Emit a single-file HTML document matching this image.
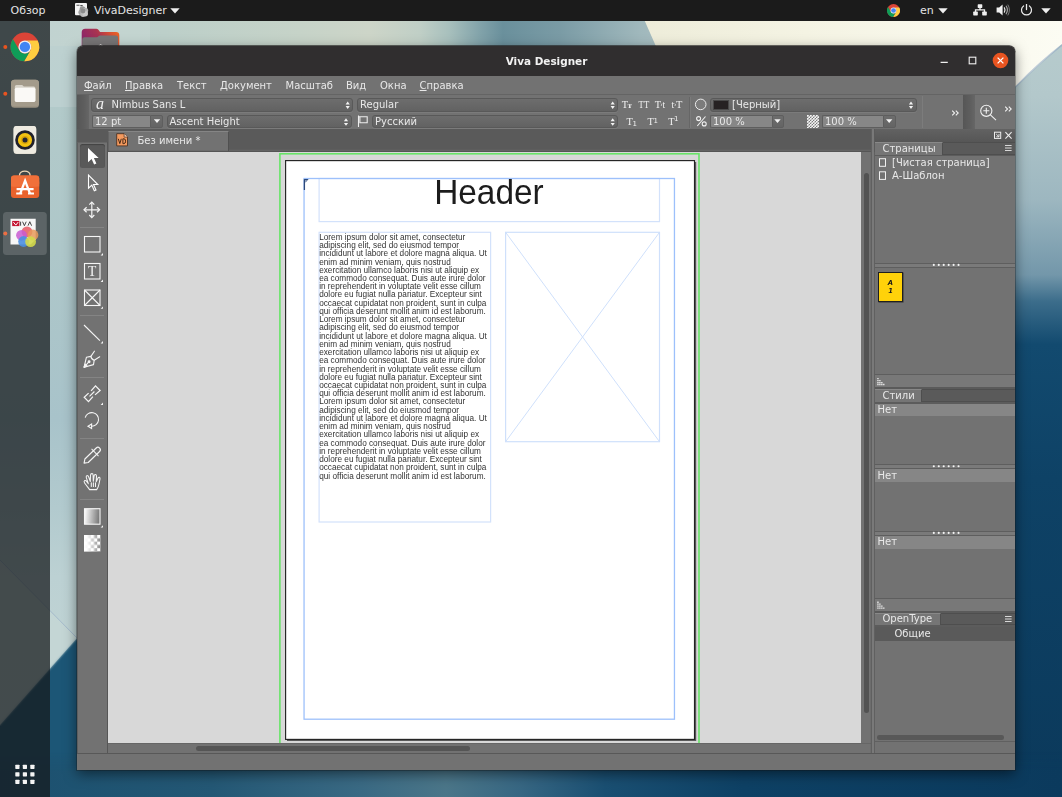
<!DOCTYPE html>
<html lang="ru">
<head>
<meta charset="utf-8">
<title>Viva Designer</title>
<style>
*{box-sizing:border-box;margin:0;padding:0}
html,body{width:1062px;height:797px;overflow:hidden;background:#0f4468}
body{position:relative;font-family:"DejaVu Sans","Liberation Sans",sans-serif;font-size:10px;color:#e8e8e8}
.abs{position:absolute}
#wall{position:absolute;left:0;top:0;width:1062px;height:797px}
#topbar{position:absolute;left:0;top:0;width:1062px;height:20.5px;background:#1b1b1b;font-size:11px;color:#e4e4e4}
#topbar span{position:absolute;top:0;line-height:21px;white-space:pre}
#dock{position:absolute;left:0;top:20.5px;width:50px;height:776.5px;background:rgba(22,26,28,.74)}
#win{will-change:transform;position:absolute;left:77px;top:46px;width:938.300px;height:723.800px;background:#727272;border-radius:6px 6px 0 0;box-shadow:0 4px 13px rgba(0,0,0,.5),0 0 0 1px rgba(30,30,30,.3);overflow:hidden}
#title{position:absolute;left:0;top:0;width:939px;height:30px;background:#302e2f;border-radius:6px 6px 0 0}
#title .t{position:absolute;left:0;width:939px;top:0;line-height:30px;text-align:center;font-weight:700;font-size:10.45px;color:#f2f2f2}
#menu{position:absolute;left:0;top:30px;width:939px;height:19px;background:#727272;border-bottom:1px solid #646464}
#menu span{position:absolute;top:0;line-height:18px;white-space:pre}
#menu u{text-decoration:underline;text-underline-offset:1px}

#in{position:absolute;left:-77px;top:-46px;width:1062px;height:797px}
#in div,#in span,#in svg{position:absolute}
.cb{background:linear-gradient(#6d6d6d,#626262);border:1px solid #595959;border-radius:3px;box-shadow:0 1px 0 rgba(255,255,255,.07)}
.cb span,.fld span{left:0;top:0;white-space:pre;line-height:12px}
.fld{background:#878787;border:1px solid #5e5e5e;border-right:none;border-radius:2px 0 0 2px}
.dd{background:linear-gradient(#6d6d6d,#646464);border:1px solid #5e5e5e;border-radius:0 2px 2px 0}
.dk{background:#5a5a5a}
.ln{background:#5c5c5c}
.tx{white-space:pre;line-height:12px}
</style>
</head>
<body>
<div id="wall"><svg width="1062" height="797" viewBox="0 0 1062 797">
<defs>
<linearGradient id="gR" x1="0" y1="0" x2="0" y2="1">
<stop offset="0" stop-color="#b9cdce"/><stop offset=".12" stop-color="#b3c8cb"/><stop offset=".25" stop-color="#9db7c0"/><stop offset=".345" stop-color="#7397aa"/><stop offset=".378" stop-color="#3c6d8b"/><stop offset=".432" stop-color="#124a6f"/><stop offset=".6" stop-color="#0e4266"/><stop offset="1" stop-color="#0b395b"/>
</linearGradient>
<linearGradient id="gT" x1="0" y1="0" x2="1" y2="0">
<stop offset="0" stop-color="#b6cccb"/><stop offset=".25" stop-color="#bccfc9"/><stop offset=".455" stop-color="#c6d3c8"/><stop offset=".56" stop-color="#cdd5c8"/><stop offset=".636" stop-color="#c0cfc6"/><stop offset=".68" stop-color="#a8c0bd"/><stop offset=".727" stop-color="#82a3aa"/><stop offset=".762" stop-color="#6a909c"/><stop offset=".848" stop-color="#7a9ba5"/><stop offset=".97" stop-color="#a0b8bc"/><stop offset="1" stop-color="#a6bcc0"/>
</linearGradient>
<linearGradient id="gC" x1="0" y1="0" x2="1" y2="0">
<stop offset="0" stop-color="#edecd9"/><stop offset=".4" stop-color="#f4f3e3"/><stop offset="1" stop-color="#fcfcf3"/>
</linearGradient>
<linearGradient id="gL" x1="0" y1="0" x2="0" y2="1">
<stop offset="0" stop-color="#b4cbca"/><stop offset=".3" stop-color="#aec7c9"/><stop offset=".55" stop-color="#a8c3ca"/><stop offset=".68" stop-color="#b2cace"/><stop offset=".78" stop-color="#bcd1d3"/><stop offset="1" stop-color="#c2d5d5"/>
</linearGradient>
<linearGradient id="gB" x1="0" y1="0" x2="1" y2="0">
<stop offset="0" stop-color="#1b506f"/><stop offset=".2" stop-color="#245875"/><stop offset=".34" stop-color="#3a6a84"/><stop offset=".42" stop-color="#4b7689"/><stop offset=".49" stop-color="#376783"/><stop offset=".57" stop-color="#1a4f72"/><stop offset=".7" stop-color="#0e4165"/><stop offset="1" stop-color="#0b3a5d"/>
</linearGradient>
<linearGradient id="gF" x1="0" y1="0.300" x2="1" y2="0"><stop offset="0" stop-color="#8f2767"/><stop offset=".4" stop-color="#a83351"/><stop offset=".75" stop-color="#dd5330"/><stop offset="1" stop-color="#ef6a1f"/></linearGradient>
</defs>
<rect x="0" y="0" width="1062" height="797" fill="url(#gR)"/>
<rect x="0" y="0" width="660" height="60" fill="url(#gT)"/>
<polygon points="635.5,0 1062,0 1062,44 1016,86 1010,100 662,60" fill="url(#gC)"/>
<path d="M1010,92L1016,86.500Q1040,62 1062,45" stroke="#8ea6c2" stroke-width="1.600" fill="none" opacity=".55" filter="url(#bl2)"/><filter id="bl2"><feGaussianBlur stdDeviation=".7"/></filter>
<rect x="0" y="46" width="90" height="680" fill="url(#gL)"/>
<rect x="50" y="21" width="100" height="86" fill="#fff" opacity=".13"/>
<filter id="bl" x="-20%" y="-20%" width="140%" height="140%"><feGaussianBlur stdDeviation="1.2"/></filter><polygon points="-10,736 77,638 130,690 130,810 -10,810" fill="#1b5676" filter="url(#bl)"/>
<polygon points="0,560 77,638 0,725" fill="#c6d7d6" opacity=".75"/><path d="M0,560L77,638" stroke="#8fa6c4" stroke-width=".8" opacity=".7"/>
<linearGradient id="mG" x1="0" y1="0" x2="0" y2="1"><stop offset="0" stop-color="#fff" stop-opacity="0"/><stop offset=".45" stop-color="#fff" stop-opacity="1"/></linearGradient><mask id="mB"><rect x="0" y="752" width="1062" height="45" fill="url(#mG)"/></mask><rect x="0" y="752" width="1062" height="45" fill="url(#gB)" mask="url(#mB)"/>
<g>
<path d="M81.700,48V32.300Q81.700,28.800 85.200,28.800H96.500Q98.100,28.800 99,30.400L99.600,31.400Q100,32.100 101.500,32.100H116Q119.300,32.100 119.300,35.400V48Z" fill="url(#gF)"/>
<path d="M82.200,48V39.500Q82.200,37.300 84.400,37.300H96.500Q97.800,37.300 98.400,36.300Q99,35.400 100.300,35.400H115.800Q118,35.400 118,37.600V48Z" fill="#777576"/>
<path d="M99,45.800l1.600,-1.600l1.600,1.600" stroke="#e4e0e0" stroke-width="1" fill="none"/>
</g>
<rect x="77" y="45.450" width="938.300" height="12" rx="6" fill="#302e2f"/>
</svg></div>
<div id="topbar">
<span style="left:10.5px">Обзор</span>
<svg class="abs" style="left:74px;top:2px" width="16" height="17" viewBox="74 2 16 17"><rect x="75" y="3" width="12" height="12.200" rx="1" fill="#f4f4f4"/><path d="M76.500,5.200h3M80.300,5.600h2.400" stroke="#555" stroke-width="1.100"/><circle cx="82.500" cy="9.200" r="2.900" fill="#979797"/><circle cx="85.300" cy="10.600" r="2.900" fill="#b4b4b4"/><circle cx="81.300" cy="12.300" r="2.900" fill="#a2a2a2"/><circle cx="83" cy="14.300" r="2.700" fill="#b9b9b9"/><circle cx="85.300" cy="13.800" r="2.700" fill="#c9c9c9"/><circle cx="83" cy="11" r="2.400" fill="#8c8c8c"/></svg>
<span style="left:94px">VivaDesigner</span>
<svg class="abs" style="left:170px;top:7.5px" width="10" height="6" viewBox="0 0 10 6"><path d="M0.3,0.3h9.4l-4.7,5.2z" fill="#efefef"/></svg>
<svg class="abs" style="left:887px;top:3.5px" width="13" height="13" viewBox="0 0 48 48"><circle cx="24" cy="24" r="24" fill="#db4437"/><path d="M45.400,13.100A24,24 0 0 1 22.700,48L33.440,29.450A10.900,10.900 0 0 0 24,13.100Z" fill="#ffcd40"/><path d="M22.700,48A24,24 0 0 1 3.860,10.900L14.560,29.450A10.900,10.900 0 0 0 33.440,29.450Z" fill="#0f9d58"/><circle cx="24" cy="24" r="10.900" fill="#f1f1f1"/><circle cx="24" cy="24" r="8.700" fill="#4285f4"/></svg>
<span style="left:920px">en</span>
<svg class="abs" style="left:937.5px;top:7.5px" width="10" height="6" viewBox="0 0 10 6"><path d="M0.3,0.3h9.4l-4.7,5.2z" fill="#efefef"/></svg>
<svg class="abs" style="left:972.5px;top:3.5px" width="14" height="12" viewBox="0 0 14 12"><rect x="4.7" y="0.3" width="4.6" height="3.6" rx=".6" fill="#f0f0f0"/><rect x="0.2" y="7.6" width="4.6" height="3.8" rx=".6" fill="#f0f0f0"/><rect x="9.2" y="7.6" width="4.6" height="3.8" rx=".6" fill="#f0f0f0"/><path d="M7,3.5v2.3M2.5,8v-2.2h9v2.2" stroke="#f0f0f0" stroke-width="1.3" fill="none"/></svg>
<svg class="abs" style="left:996px;top:4px" width="14" height="12" viewBox="0 0 14 12"><path d="M0.6,3.6h2.6l3.4,-3.2v11.2l-3.4,-3.2h-2.6z" fill="#f0f0f0"/><path d="M8.2,3.4q1.6,2.6 0,5.2" stroke="#e4e4e4" stroke-width="1.2" fill="none"/><path d="M10,1.8q2.8,4.2 0,8.4" stroke="#a9a9a9" stroke-width="1.1" fill="none"/><path d="M11.8,0.6q3.2,5.4 0,10.8" stroke="#7c7c7c" stroke-width="1" fill="none"/></svg>
<svg class="abs" style="left:1019.5px;top:3.5px" width="13" height="12" viewBox="0 0 13 12"><path d="M6.5,0.3v5.2" stroke="#eee" stroke-width="1.3" fill="none" stroke-linecap="round"/><path d="M3.6,1.9a5,5 0 1 0 5.8,0" stroke="#eee" stroke-width="1.2" fill="none" stroke-linecap="round"/></svg>
<svg class="abs" style="left:1040.5px;top:7.5px" width="10" height="6" viewBox="0 0 10 6"><path d="M0.3,0.3h9.4l-4.7,5.2z" fill="#efefef"/></svg>
</div>
<div id="dock">
<svg class="abs" style="left:0;top:0" width="50" height="777" viewBox="0 20.5 50 777">
<circle cx="5.3" cy="46.4" r="2" fill="#e95420"/>
<circle cx="5.3" cy="93.2" r="2" fill="#e95420"/>
<circle cx="5.3" cy="233" r="2" fill="#e95420"/>
<!-- chrome -->
<g transform="translate(10.600,32.100) scale(0.5958)">
<circle cx="24" cy="24" r="24" fill="#db4437"/><path d="M45.400,13.100A24,24 0 0 1 22.700,48L33.440,29.450A10.900,10.900 0 0 0 24,13.100Z" fill="#ffcd40"/><path d="M22.700,48A24,24 0 0 1 3.860,10.900L14.560,29.450A10.900,10.900 0 0 0 33.440,29.450Z" fill="#0f9d58"/><circle cx="24" cy="24" r="10.900" fill="#f1f1f1"/><circle cx="24" cy="24" r="8.700" fill="#4285f4"/>
</g>
<!-- files -->
<rect x="11" y="79.2" width="28" height="28" rx="3.5" fill="#9a9282"/>
<rect x="11" y="79.2" width="28" height="26.5" rx="3.5" fill="#a39b8b"/>
<path d="M14.8,86.2 q0,-1.8 1.8,-1.8 h5.6 l1.6,1.6 h10 q1.6,0 1.6,1.6 v12.2 q0,1.6 -1.6,1.6 h-17.4 q-1.6,0 -1.6,-1.6z" fill="#d9d5cb"/>
<rect x="14.8" y="87.2" width="20.6" height="14.2" rx="1.6" fill="#faf9f6"/>
<!-- rhythmbox -->
<rect x="13.6" y="125.4" width="22.6" height="28.2" rx="3" fill="#e6e2d6"/>
<rect x="13.6" y="125.4" width="22.6" height="27" rx="3" fill="#eeebe1"/>
<circle cx="25" cy="139.5" r="9.8" fill="#21212b"/><circle cx="25" cy="139.5" r="7.1" fill="#f3c211"/><circle cx="25" cy="139.5" r="3.9" fill="#d9a50c"/><circle cx="25" cy="139.5" r="2.5" fill="#262630"/>
<!-- software -->
<path d="M19.5,176 v-1.2 a5.3,4.2 0 0 1 10.6,0 v1.2" stroke="#f0d9b8" stroke-width="1.3" fill="none"/>
<rect x="11" y="175" width="28.2" height="22.6" rx="3" fill="#e9622c"/>
<rect x="11" y="175" width="28.2" height="11" rx="3" fill="#f0703a"/>
<rect x="11" y="181" width="28.2" height="5" fill="#f0703a"/>
<path d="M20.2,193.2 l4.9,-13 l4.9,13 M16.6,188.6 h17" stroke="#fff" stroke-width="2.3" fill="none"/>
<path d="M16.2,193 h6 M28,193 h6" stroke="#fff" stroke-width="1.8" fill="none"/>
<!-- viva -->
<rect x="3" y="211.5" width="43.8" height="43" rx="3.5" fill="#fff" opacity=".16"/>
<path d="M10.5,218.2h25.2v20.5l-5,5.4h-20.2z" fill="#f7f7f7"/>
<rect x="12.2" y="220.4" width="7.2" height="5.2" fill="#c4122f"/>
<path d="M13.4,221.6l2.4,3l2.4,-3" stroke="#fff" stroke-width="1" fill="none"/>
<path d="M20.6,221.2v4M22.6,221.2l1.8,4l1.8,-4M28,225.2l1.8,-4l1.8,4" stroke="#333" stroke-width=".9" fill="none"/>
<circle cx="27" cy="231.3" r="5.4" fill="#e8616a" opacity=".9"/>
<circle cx="21.5" cy="234.8" r="5.4" fill="#c95bd2" opacity=".85"/>
<circle cx="33" cy="234.5" r="5.4" fill="#e89a5a" opacity=".85"/>
<circle cx="23.6" cy="241" r="5.4" fill="#4a8fe0" opacity=".9"/>
<circle cx="30.6" cy="241.2" r="5.4" fill="#d3d94a" opacity=".9"/>
<!-- grid -->
<g fill="#f4f4f4">
<rect x="15.3" y="764.2" width="4.2" height="4.2" rx=".6"/><rect x="22.8" y="764.2" width="4.2" height="4.2" rx=".6"/><rect x="30.3" y="764.2" width="4.2" height="4.2" rx=".6"/>
<rect x="15.3" y="771.7" width="4.2" height="4.2" rx=".6"/><rect x="22.8" y="771.7" width="4.2" height="4.2" rx=".6"/><rect x="30.3" y="771.7" width="4.2" height="4.2" rx=".6"/>
<rect x="15.3" y="779.2" width="4.2" height="4.2" rx=".6"/><rect x="22.8" y="779.2" width="4.2" height="4.2" rx=".6"/><rect x="30.3" y="779.2" width="4.2" height="4.2" rx=".6"/>
</g>
</svg>
</div>
<div id="win">
<div id="title"><div class="t">Viva Designer</div><svg class="abs" style="left:850px;top:0" width="88" height="30" viewBox="927 46 88 30"><path d="M940.600,62.400h7.200" stroke="#f0f0f0" stroke-width="1.200"/><rect x="969.200" y="57.200" width="6.600" height="6.600" fill="none" stroke="#f0f0f0" stroke-width="1.100"/><circle cx="1000.500" cy="60.500" r="7.800" fill="#e95420"/><path d="M997.600,57.600l5.800,5.800M1003.400,57.600l-5.800,5.800" stroke="#fff" stroke-width="1.300"/></svg></div>
<div id="menu"></div>
<div id="in">
<!-- menu -->
<span class="tx" style="left:84px;top:80px"><u>Ф</u>айл</span>
<span class="tx" style="left:125px;top:80px"><u>П</u>равка</span>
<span class="tx" style="left:177px;top:80px">Текст</span>
<span class="tx" style="left:220px;top:80px">Документ</span>
<span class="tx" style="left:285.5px;top:80px">Масштаб</span>
<span class="tx" style="left:346px;top:80px">Вид</span>
<span class="tx" style="left:380px;top:80px">Окна</span>
<span class="tx" style="left:419.6px;top:80px"><u>С</u>правка</span>
<!-- toolbar -->
<div style="left:77px;top:95px;width:12px;height:34px;background:linear-gradient(90deg,#565656,#5e5e5e 60%,#666)"></div>
<div class="cb" style="left:91px;top:97.5px;width:262px;height:14px"><span style="left:4px;top:-3px;font-family:'Liberation Serif','DejaVu Serif',serif;font-style:italic;font-size:16px;line-height:15px;color:#f0f0f0">a</span><span style="left:19.5px;top:0">Nimbus Sans L</span></div>
<div class="cb" style="left:357px;top:97.5px;width:261px;height:14px"><span style="left:2px">Regular</span></div>
<div class="fld" style="left:92px;top:114.5px;width:58px;height:13.5px"><span style="left:2px;top:0">12 pt</span></div>
<div class="dd" style="left:150px;top:114.5px;width:12.5px;height:13.5px"></div>
<div class="cb" style="left:166.5px;top:114.5px;width:185px;height:13.5px"><span style="left:2px;top:0">Ascent Height</span></div>
<div class="cb" style="left:372px;top:114.5px;width:246px;height:13.5px"><span style="left:2px;top:0">Русский</span></div>
<svg style="left:0;top:0" width="1062" height="160" viewBox="0 0 1062 160">
<g fill="#f2f2f2">
<path d="M153.8,119.3h6.4l-3.2,3.6z"/>
<path d="M345.6,104.4l2.1,-2.9l2.1,2.9zM345.6,106.1l2.1,2.9l2.1,-2.9z"/>
<path d="M610.6,104.4l2.1,-2.9l2.1,2.9zM610.6,106.1l2.1,2.9l2.1,-2.9z"/>
<path d="M343.9,121.2l2.1,-2.9l2.1,2.9zM343.9,122.9l2.1,2.9l2.1,-2.9z"/>
<path d="M610.6,121.2l2.1,-2.9l2.1,2.9zM610.6,122.9l2.1,2.9l2.1,-2.9z"/>
</g>
<path d="M358.5,115.400v11.600M358.500,116.700h8.700v6h-7.300v-6" stroke="#ededed" stroke-width="1.1" fill="none"/>
</svg>
<!-- toolbar right -->
<svg style="left:0;top:0" width="1062" height="160" viewBox="0 0 1062 160">
<g font-family="'Liberation Serif','DejaVu Serif',serif" fill="#f0f0f0" font-size="10.400">
<text x="621.800" y="107.800">T</text><text x="627.600" y="107.800" font-size="7.400" font-weight="700" font-family="'DejaVu Serif',serif">т</text>
<text x="638.600" y="107.800" textLength="10.600" lengthAdjust="spacingAndGlyphs">TT</text>
<text x="654.700" y="107.800">T</text><text x="660.300" y="106.300" font-size="7">›</text><text x="662.600" y="107.800" font-size="9.500">t</text>
<text x="671.500" y="107.800" font-size="9.500">t</text><text x="674.100" y="106.300" font-size="7">›</text><text x="676" y="107.800">T</text>
<text x="626.600" y="124.600">T</text><text x="632.600" y="125.600" font-size="7" font-family="'DejaVu Sans',sans-serif">1</text>
<text x="647.500" y="124.600">T</text><text x="653.400" y="122.800" font-size="7" font-family="'DejaVu Sans',sans-serif">1</text>
<text x="668.200" y="124.600">T</text><text x="674.100" y="121.400" font-size="7" font-family="'DejaVu Sans',sans-serif">1</text>
</g>
<path d="M689.5,97v31" stroke="#666" stroke-width="1"/><path d="M690.5,97v31" stroke="#7b7b7b" stroke-width="1"/>
<circle cx="700.7" cy="104.4" r="5.3" fill="#7c7c7c" stroke="#ececec" stroke-width="1"/>
<path d="M705.5,116.5l-8.2,9.5" stroke="#f0f0f0" stroke-width="1.1"/><circle cx="698.6" cy="118.6" r="2" fill="none" stroke="#f0f0f0" stroke-width="1.1"/><circle cx="704.2" cy="123.9" r="2" fill="none" stroke="#f0f0f0" stroke-width="1.1"/>
</svg>
<div class="cb" style="left:709.5px;top:97.5px;width:207px;height:14px"><div style="left:2px;top:1.5px;width:16.5px;height:9.5px;background:#262223;border:1px solid #4a4a4a"></div><span style="left:21.5px">[Черный]</span></div>
<div class="fld" style="left:710px;top:114.5px;width:61.5px;height:13.5px"><span style="left:2px">100 %</span></div>
<div class="dd" style="left:771.5px;top:114.5px;width:12px;height:13.5px"></div>
<div class="fld" style="left:822px;top:114.5px;width:61px;height:13.5px"><span style="left:2px">100 %</span></div>
<div class="dd" style="left:883px;top:114.5px;width:12.5px;height:13.5px"></div>
<div style="left:806.5px;top:115px;width:12.5px;height:12.5px;background:#f4f4f4;background-image:linear-gradient(45deg,#7d7d7d 25%,transparent 25%,transparent 75%,#7d7d7d 75%),linear-gradient(45deg,#7d7d7d 25%,transparent 25%,transparent 75%,#7d7d7d 75%);background-size:3px 3px;background-position:0 0,1.5px 1.5px"></div>
<div style="left:922px;top:96px;width:1px;height:32px;background:#7c7c7c"></div>
<div style="left:962.5px;top:95px;width:12px;height:34px;background:linear-gradient(90deg,#565656,#5e5e5e 60%,#666)"></div>
<svg style="left:0;top:0" width="1062" height="160" viewBox="0 0 1062 160">
<g fill="#f2f2f2">
<path d="M774.3,119.3h6.4l-3.2,3.6z"/><path d="M886,119.3h6.4l-3.2,3.6z"/>
<path d="M908.9,104.4l2.1,-2.9l2.1,2.9zM908.9,106.1l2.1,2.9l2.1,-2.9z"/>
</g>
<g stroke="#f0f0f0" stroke-width="1.1" fill="none">
<path d="M952.2,110.6l2.4,2.4l-2.4,2.4M955.8,110.6l2.4,2.4l-2.4,2.4"/>
<path d="M1005.2,106.6l2.4,2.4l-2.4,2.4M1008.8,106.6l2.4,2.4l-2.4,2.4"/>
<circle cx="986.3" cy="110.8" r="5.6"/><path d="M983.3,110.8h6M986.3,107.8v6M990.4,114.9l5.6,5.2"/>
</g>
</svg>
<!-- tab band + canvas -->
<div class="dk" style="left:77px;top:129px;width:939px;height:22.5px"></div>
<div style="left:107.500px;top:130.500px;width:121px;height:20px;background:#727272;border-top:1px solid #858585;border-left:1px solid #646464;border-right:1px solid #505050"></div>
<svg style="left:115px;top:132px" width="15" height="16" viewBox="0 0 15 16"><path d="M1.700,1.700h7.400l3.400,3.400v8.800h-10.800z" fill="#f59a5e" stroke="#4a3226" stroke-width=".9"/><path d="M9.100,1.700v3.400h3.400" fill="#fbd3b6" stroke="#4a3226" stroke-width=".7"/><path d="M3.300,6.800l1.500,4.800l1.500,-4.800M7.900,6.800v4.800h1q1.700,0 1.700,-2.400t-1.700,-2.400z" stroke="#3d2414" stroke-width=".95" fill="none"/></svg>
<span class="tx" style="left:137.500px;top:134.700px">Без имени *</span>
<div id="cv" style="left:108px;top:151.5px;width:753px;height:591.5px;background:#d8d8d8;overflow:hidden">
<div style="left:-108px;top:-151.5px;width:1062px;height:797px">
<svg style="left:0;top:0" width="1062" height="797" viewBox="0 0 1062 797">
<rect x="279.9" y="153.8" width="419.1" height="620" fill="none" stroke="#62e462" stroke-width="1.5"/>
<rect x="287" y="162" width="409.2" height="579" fill="#5a5a5a"/>
<rect x="285.6" y="160.6" width="408.9" height="578.8" fill="#fff" stroke="#222" stroke-width="1.15"/>
<g fill="none" stroke-width="1.2">
<rect x="319.1" y="178.5" width="340.4" height="43.1" stroke="#d3e2fb"/>
<rect x="319.1" y="232.3" width="171.5" height="289.7" stroke="#d3e2fb"/>
<rect x="505.6" y="232.3" width="153.9" height="209.4" stroke="#cfe0fb"/>
<path d="M505.600,232.300L659.5,441.700M659.5,232.300L505.600,441.700" stroke="#cfe0fb" stroke-width="1"/>
<rect x="304.05" y="178.500" width="370.400" height="540.700" stroke="#9dc0fb" stroke-width="1.3"/>
</g>
<path d="M304.400,179.200v10.800" stroke="#2d4a7a" stroke-width="1.3" fill="none"/><path d="M304,179h4.600l-3,3.400z" fill="#2d4a7a"/><path d="M305.300,180.200h1.600l-1.600,1.800z" fill="#e8eefc"/>
</svg>
<div style="left:318.2px;top:178.6px;width:341.5px;height:43px;overflow:hidden"><div style="left:0;top:-4.8px;width:341.5px;height:38px;text-align:center;font-family:'Liberation Sans',sans-serif;font-size:33.4px;line-height:38px;color:#1c1c1c;white-space:pre;transform:scaleY(1.065);transform-origin:50% 30.5px">Header</div></div>
<div style="left:319.2px;top:233.8px;width:180px;font-family:'Liberation Sans',sans-serif;font-size:8.22px;line-height:8.235px;color:#333;white-space:pre">Lorem ipsum dolor sit amet, consectetur<br>adipiscing elit, sed do eiusmod tempor<br>incididunt ut labore et dolore magna aliqua. Ut<br>enim ad minim veniam, quis nostrud<br>exercitation ullamco laboris nisi ut aliquip ex<br>ea commodo consequat. Duis aute irure dolor<br>in reprehenderit in voluptate velit esse cillum<br>dolore eu fugiat nulla pariatur. Excepteur sint<br>occaecat cupidatat non proident, sunt in culpa<br>qui officia deserunt mollit anim id est laborum.<br>Lorem ipsum dolor sit amet, consectetur<br>adipiscing elit, sed do eiusmod tempor<br>incididunt ut labore et dolore magna aliqua. Ut<br>enim ad minim veniam, quis nostrud<br>exercitation ullamco laboris nisi ut aliquip ex<br>ea commodo consequat. Duis aute irure dolor<br>in reprehenderit in voluptate velit esse cillum<br>dolore eu fugiat nulla pariatur. Excepteur sint<br>occaecat cupidatat non proident, sunt in culpa<br>qui officia deserunt mollit anim id est laborum.<br>Lorem ipsum dolor sit amet, consectetur<br>adipiscing elit, sed do eiusmod tempor<br>incididunt ut labore et dolore magna aliqua. Ut<br>enim ad minim veniam, quis nostrud<br>exercitation ullamco laboris nisi ut aliquip ex<br>ea commodo consequat. Duis aute irure dolor<br>in reprehenderit in voluptate velit esse cillum<br>dolore eu fugiat nulla pariatur. Excepteur sint<br>occaecat cupidatat non proident, sunt in culpa<br>qui officia deserunt mollit anim id est laborum.</div>
</div></div>
<div style="left:106.5px;top:142px;width:1.5px;height:611px;background:#565656"></div>
<svg style="left:108px;top:149px" width="764" height="3" viewBox="108 149 764 3"><rect x="229" y="149.800" width="642" height="1" fill="#6c6c6c"/><rect x="108" y="150.800" width="763" height="1" fill="#555"/></svg>
<!-- left toolbox -->
<div style="left:77px;top:142px;width:29.5px;height:611px;background:#727272;border-left:1px solid #5e5e5e;border-top:1px solid #666"></div>
<div style="left:79.5px;top:144px;width:25px;height:24px;background:#595959;border-radius:2.5px;box-shadow:inset 0 1px 1px rgba(0,0,0,.25)"></div>
<!-- scrollbars -->
<div style="left:861px;top:151.500px;width:10px;height:591.500px;background:#727272"></div>
<div style="left:864px;top:173px;width:5px;height:540px;background:#525252;border-radius:2.500px"></div>
<div style="left:108px;top:743px;width:764.5px;height:10px;background:#727272;border-top:1px solid #666"></div>
<div style="left:196px;top:746px;width:273.5px;height:5px;background:#555;border-radius:2.5px"></div>
<div style="left:77px;top:753px;width:939px;height:1px;background:#585858"></div>
<svg style="left:870px;top:129px" width="6" height="624" viewBox="870 129 6 624"><rect x="870.800" y="129" width="4" height="624" fill="#5a5a5a"/><rect x="871.800" y="129" width="2.300" height="624" fill="#797979"/></svg>
<!-- right panel -->
<div style="left:875px;top:129px;width:140.5px;height:13px;background:linear-gradient(#626262,#565656)"></div>
<svg style="left:990px;top:129px" width="26" height="13" viewBox="990 129 26 13"><g stroke="#eee" stroke-width="1" fill="none"><rect x="994.5" y="132.200" width="6.2" height="6.2"/><path d="M996.200,136.800h2.800v-2.800M996.200,134l2.800,2.800" stroke-width=".9"/><path d="M1005.400,132.200l6.200,6.400M1011.600,132.200l-6.200,6.400" stroke-width="1.1"/></g></svg>
<!-- pages tab bar -->
<div class="dk" style="left:875px;top:142px;width:140.5px;height:12.5px;border:1px solid #4e4e4e;border-left:none"></div>
<div style="left:875px;top:142px;width:67.5px;height:12.5px;background:#757575;border-top:1px solid #888;border-right:1px solid #4e4e4e"></div>
<span class="tx" style="left:882.5px;top:142.5px">Страницы</span>
<svg style="left:1004px;top:144px" width="9" height="9" viewBox="0 0 9 9"><path d="M1,1.500h6.600M1,4h6.600M1,6.500h6.600" stroke="#d8d8d8" stroke-width="1.1"/></svg>
<div style="left:875px;top:154.5px;width:140.5px;height:1.5px;background:#5c5c5c"></div>
<svg style="left:875px;top:156px" width="20" height="30" viewBox="875 156 20 30"><g stroke="#f0f0f0" stroke-width="1" fill="none"><rect x="879.5" y="158.700" width="6" height="7.600"/><rect x="879.5" y="171.800" width="6" height="7.600"/></g></svg>
<span class="tx" style="left:892px;top:156.500px">[Чистая страница]</span>
<span class="tx" style="left:892px;top:169.600px">А-Шаблон</span>
<div style="left:875px;top:262.500px;width:140.5px;height:1px;background:#5e5e5e"></div>
<div style="left:875px;top:266.500px;width:140.5px;height:1px;background:#5e5e5e"></div>
<div style="left:875px;top:263.500px;width:140.5px;height:3px;background:#7a7a7a"></div>
<svg style="left:930px;top:263px" width="34" height="4" viewBox="930 263 34 4"><g fill="#f4f4f4"><circle cx="933.800" cy="264.900" r="1.050"/><circle cx="938.750" cy="264.900" r="1.050"/><circle cx="943.700" cy="264.900" r="1.050"/><circle cx="948.650" cy="264.900" r="1.050"/><circle cx="953.600" cy="264.900" r="1.050"/><circle cx="958.550" cy="264.900" r="1.050"/></g></svg>
<!-- yellow page thumb -->
<div style="left:878px;top:272px;width:25px;height:30px;background:#ffd20a;border:1px solid #1f1f1f;box-shadow:0.5px 0.5px 0 #333"></div>
<span style="left:878px;top:278.800px;width:25px;text-align:center;font-size:6.800px;line-height:8.300px;font-weight:700;font-style:italic;color:#1a1a1a">A<br>1</span>
<div style="left:875px;top:373.500px;width:140.5px;height:1.5px;background:#5e5e5e"></div>
<div style="left:875px;top:375px;width:140.5px;height:12px;background:#787878"></div>
<div style="left:875px;top:387px;width:140.5px;height:2px;background:#5a5a5a"></div>
<!-- styles tab -->
<div class="dk" style="left:875px;top:389px;width:140.5px;height:12.5px;border:1px solid #4e4e4e;border-left:none"></div>
<div style="left:875px;top:389px;width:46.5px;height:12.5px;background:#757575;border-top:1px solid #888;border-right:1px solid #4e4e4e"></div>
<span class="tx" style="left:882.5px;top:389.5px">Стили</span>
<div style="left:875px;top:401.500px;width:140.5px;height:2px;background:#5c5c5c"></div>
<div style="left:875px;top:403.500px;width:140.5px;height:12.5px;background:#868686"></div>
<span class="tx" style="left:877.5px;top:403.700px">Нет</span>
<div style="left:875px;top:463.800px;width:140.5px;height:1px;background:#5e5e5e"></div>
<div style="left:875px;top:464.800px;width:140.5px;height:3px;background:#7a7a7a"></div>
<div style="left:875px;top:467.800px;width:140.5px;height:1.5px;background:#5e5e5e"></div>
<div style="left:875px;top:469.300px;width:140.5px;height:13px;background:#868686"></div>
<span class="tx" style="left:877.5px;top:469.800px">Нет</span>
<div style="left:875px;top:530.500px;width:140.5px;height:1px;background:#5e5e5e"></div>
<div style="left:875px;top:531.500px;width:140.5px;height:3px;background:#7a7a7a"></div>
<div style="left:875px;top:534.500px;width:140.5px;height:1.5px;background:#5e5e5e"></div>
<div style="left:875px;top:536px;width:140.5px;height:12.8px;background:#868686"></div>
<span class="tx" style="left:877.5px;top:536.400px">Нет</span>
<svg style="left:930px;top:464px" width="34" height="72" viewBox="930 464 34 72"><g fill="#f4f4f4"><circle cx="933.800" cy="466.300" r="1.050"/><circle cx="938.750" cy="466.300" r="1.050"/><circle cx="943.700" cy="466.300" r="1.050"/><circle cx="948.650" cy="466.300" r="1.050"/><circle cx="953.600" cy="466.300" r="1.050"/><circle cx="958.550" cy="466.300" r="1.050"/>
<circle cx="933.800" cy="532.900" r="1.050"/><circle cx="938.750" cy="532.900" r="1.050"/><circle cx="943.700" cy="532.900" r="1.050"/><circle cx="948.650" cy="532.900" r="1.050"/><circle cx="953.600" cy="532.900" r="1.050"/><circle cx="958.550" cy="532.900" r="1.050"/></g></svg>
<div style="left:875px;top:597.500px;width:140.5px;height:1.5px;background:#5e5e5e"></div>
<div style="left:875px;top:599px;width:140.5px;height:11.5px;background:#787878"></div>
<div style="left:875px;top:610.500px;width:140.5px;height:2px;background:#5a5a5a"></div>
<svg style="left:876px;top:375px" width="10" height="236" viewBox="876 375 10 236"><g fill="#f2f2f2"><path d="M877.30,378.00h1.3v1.3h-1.3zM877.30,379.95h1.3v1.3h-1.3zM879.25,379.95h1.3v1.3h-1.3zM877.30,381.90h1.3v1.3h-1.3zM879.25,381.90h1.3v1.3h-1.3zM881.20,381.90h1.3v1.3h-1.3zM877.30,383.85h1.3v1.3h-1.3zM879.25,383.85h1.3v1.3h-1.3zM881.20,383.85h1.3v1.3h-1.3zM883.15,383.85h1.3v1.3h-1.3z"/><path d="M877.30,601.60h1.3v1.3h-1.3zM877.30,603.55h1.3v1.3h-1.3zM879.25,603.55h1.3v1.3h-1.3zM877.30,605.50h1.3v1.3h-1.3zM879.25,605.50h1.3v1.3h-1.3zM881.20,605.50h1.3v1.3h-1.3zM877.30,607.45h1.3v1.3h-1.3zM879.25,607.45h1.3v1.3h-1.3zM881.20,607.45h1.3v1.3h-1.3zM883.15,607.45h1.3v1.3h-1.3z"/></g></svg>
<!-- opentype tab -->
<div class="dk" style="left:875px;top:612.500px;width:140.5px;height:12.5px;border:1px solid #4e4e4e;border-left:none"></div>
<div style="left:875px;top:612.500px;width:66px;height:12.5px;background:#757575;border-top:1px solid #888;border-right:1px solid #4e4e4e"></div>
<span class="tx" style="left:882.5px;top:612.800px">OpenType</span>
<svg style="left:1004px;top:614.500px" width="9" height="9" viewBox="0 0 9 9"><path d="M1,1.500h6.600M1,4h6.600M1,6.500h6.600" stroke="#d8d8d8" stroke-width="1.1"/></svg>
<div style="left:875px;top:625px;width:140.5px;height:2px;background:#5c5c5c"></div>
<div class="dk" style="left:875px;top:627px;width:140.5px;height:14px"></div>
<span class="tx" style="left:894.5px;top:627.800px">Общие</span>
<div style="left:877px;top:735px;width:126.500px;height:4.500px;background:#585858;border-radius:2.2px"></div>
<div style="left:875px;top:740.500px;width:140.5px;height:1px;background:#606060"></div>
<!-- tool icons -->
<svg style="left:77px;top:142px" width="30" height="420" viewBox="77 142 30 420">
<g stroke="#848484" stroke-width="1"><path d="M80,227.5h24M80,315.5h24M80,377.5h24M80,438.5h24M80,499.5h24"/></g>
<path d="M88,148v14.2l3.6,-3.3l2.5,5.6l2.3,-1l-2.5,-5.5h4.8z" fill="#fff"/>
<path d="M88.5,175.2v13l3.3,-3.1l2.5,5.6l1.7,-0.8l-2.5,-5.4h4.3z" fill="none" stroke="#fff" stroke-width="1.1" stroke-linejoin="miter"/>
<g stroke="#f4f4f4" stroke-width="1.2" fill="none"><path d="M84.5,209.8h14.6M91.8,202.5v14.6"/><path d="M89.3,204.6l2.5,-2.6l2.5,2.6M89.3,215l2.5,2.6l2.5,-2.6M86.6,207.3l-2.6,2.5l2.6,2.5M97,207.3l2.6,2.5l-2.6,2.5"/></g>
<g fill="#f4f4f4"><path d="M103,253v2.4h-2.4zM103,279.6v2.4h-2.4zM103,306.4v2.4h-2.4zM103,341v2.4h-2.4zM103,402.6v2.4h-2.4zM103,525.2v2.4h-2.4z"/></g>
<g stroke="#f6f6f6" stroke-width="1.1" fill="none">
<rect x="84.5" y="236.5" width="15.5" height="15.5"/>
<rect x="84.5" y="263.5" width="15.5" height="15.5"/>
<rect x="84.5" y="290" width="15.5" height="15.5"/><path d="M84.5,290l15.5,15.5M100,290l-15.5,15.5"/>
<path d="M84,325l15.9,15.6"/>
</g>
<text x="92.2" y="276" font-family="'Liberation Serif','DejaVu Serif',serif" font-size="13.6" fill="#f6f6f6" text-anchor="middle">T</text>
<!-- pen -->
<g stroke="#f4f4f4" stroke-width="1.100" fill="none" stroke-linejoin="round" stroke-linecap="round"><path d="M84.100,367.200L86.400,357.300L90.900,356.400Q91.300,359.400 94.200,360.200L93.500,364.600Z"/><path d="M84.100,367.200L88.600,362.200"/><circle cx="89.100" cy="361.700" r="0.900" fill="#f4f4f4"/><path d="M90.900,356.400L94.400,351.200M94.200,360.200L99.700,356.800"/><path d="M84.100,367.200l1,-3.200l2,2.200z" fill="#f4f4f4"/></g>
<!-- link -->
<g stroke="#f4f4f4" stroke-width="1.250" fill="none" stroke-linejoin="miter"><path d="M91.100,390.800L95.500,385.900L100.100,390.500L95,394.900"/><path d="M88.600,393.100L84.200,397.300L88.500,401.600L92.900,396.700"/><path d="M89.500,396.400L94.400,391.500" stroke-width="1.100"/></g>
<!-- rotate -->
<g stroke="#f4f4f4" stroke-width="1.1" fill="none"><path d="M85.2,417.6a6.8,6.8 0 1 1 6.2,8.6"/><path d="M91.6,424l-3.6,2.2l3.6,2.2z"/></g>
<!-- eyedropper -->
<g stroke="#f4f4f4" stroke-width="1.150" fill="none" stroke-linejoin="round" transform="translate(84.100,463.100) rotate(-44)"><path d="M0,0L3.400,-2.400L19.200,-2.400A2.400,2.400 0 0 1 19.200,2.400L3.400,2.400Z"/><path d="M15.200,-5v10" stroke-width="1"/></g>
<!-- hand -->
<g stroke="#f4f4f4" stroke-width="1.050" fill="none" stroke-linejoin="round" stroke-linecap="round"><path d="M89.600,489.600L84.600,483Q83.600,481.200 84.600,480.600Q85.800,480.200 86.800,481.600L88.400,483.800L86.300,477.600Q85.900,475.800 87.100,475.500Q88.300,475.500 88.700,477L90.300,481.500L90.500,475.200Q90.600,473.600 91.900,473.600Q93.100,473.700 93.100,475.200L93.300,481.300L94.100,475.800Q94.400,474.300 95.500,474.500Q96.600,474.800 96.500,476.200L96.200,481.800L97.900,478.200Q98.500,476.900 99.400,477.300Q100.300,477.800 100,479L99,484Q98.400,487.400 96.700,489.600Z"/><path d="M91.300,482.800v3.800M93.400,482.800v3.800M95.500,482.800v3.800"/></g>
<defs><linearGradient id="tg" x1="0" x2="1" y1="0" y2="0.08"><stop offset="0" stop-color="#fff"/><stop offset="1" stop-color="#777"/></linearGradient>
<pattern id="ck" x="84" y="535" width="6.600" height="6.600" patternUnits="userSpaceOnUse"><rect width="6.600" height="6.600" fill="#fff"/><rect x="3.300" width="3.300" height="3.300" fill="#808080"/><rect y="3.300" width="3.300" height="3.300" fill="#808080"/></pattern>
<linearGradient id="cf" x1="0" x2="1"><stop offset="0" stop-color="#fff" stop-opacity="1"/><stop offset=".25" stop-color="#fff" stop-opacity=".9"/><stop offset="1" stop-color="#fff" stop-opacity="0.1"/></linearGradient></defs>
<rect x="84.500" y="508.700" width="15.5" height="15.5" fill="url(#tg)" stroke="#f6f6f6" stroke-width="1.1"/>
<rect x="84" y="535" width="16.5" height="16.5" fill="url(#ck)"/><rect x="84" y="535" width="16.5" height="16.5" fill="url(#cf)"/>
</svg>
</div>
</div>
</body>
</html>
